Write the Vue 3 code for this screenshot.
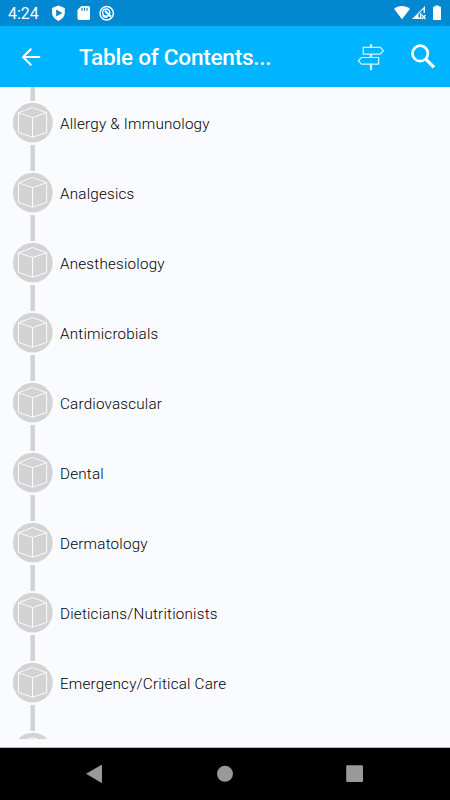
<template>
  <div class="screen">
    <div class="status-bar">
      <span class="clock">4:24</span>
      <svg class="status-left" width="70" height="26" viewBox="0 0 70 26">
        <path d="M8.400 5.500l6.400 2.400v4.700c0 3.700-2.600 6.700-6.400 8.300C4.600 19.300 2 16.300 2 12.600V7.900z" fill="#fff" />
        <path d="M6.200 9.400v7.200l6.100-3.600z" fill="#0288d1" />
        <path d="M31.300 6h7.200c.9 0 1.500.6 1.500 1.500v11c0 .9-.6 1.500-1.500 1.500H29c-.9 0-1.500-.6-1.500-1.500V10z" fill="#fff" />
        <path d="M32 7.700v3M34.500 7.700v3M37 7.700v3" stroke="#0288d1" stroke-width="1.200" />
        <circle cx="56.700" cy="13.200" r="6.700" fill="none" stroke="#fff" stroke-width="1.500" />
        <circle cx="56.200" cy="12.600" r="3.600" fill="none" stroke="#fff" stroke-width="1.400" />
        <path d="M55 10.800l6 6" stroke="#fff" stroke-width="2.200" />
        <path d="M52.600 15.300c1.100 1.700 2.700 2.300 4.800 2" fill="none" stroke="#fff" stroke-width="1.200" />
      </svg>
      <svg class="status-right" width="56" height="26" viewBox="0 0 56 26">
        <path d="M0 8.800C4.600 5 11.400 5 16 8.800L8 19.200z" fill="#fff" />
        <path d="M18 19L31 6v7h-3.500v6z" fill="#fff" />
        <path d="M29.500 9V13h-3.400v4.600h-1.600V14z" fill="#0288d1" />
        <path d="M28 15l3.500 4M31.500 15L28 19" stroke="#fff" stroke-width="1.200" />
        <path d="M41.300 6.100V5.600h3.400v.9h1.400c.5 0 .9.400.9.900v11.500c0 .6-.4 1-.9 1h-6.200c-.6 0-.9-.4-.9-1V7.400c0-.5.3-.9.9-.9h1.400z" fill="#fff" />
      </svg>
    </div>

    <header class="toolbar">
      <svg class="back" width="24" height="24" viewBox="0 0 24 24">
        <path d="M21.200 12H4.200M12.300 3.800L4 12l8.300 8.200" fill="none" stroke="#fff" stroke-width="2" />
      </svg>
      <h1>Table of Contents...</h1>
      <svg class="signpost" width="30" height="30" viewBox="0 0 30 30">
        <g fill="none" stroke="#d9f3ff" stroke-width="1.200">
          <path d="M6.200 5.400h17l3.200 3.300-3.200 3.500h-17z" />
          <path d="M21.600 15.500H4.500l-3.200 3.300 3.200 3.300h17.100z" />
        </g>
        <path d="M14 2.300v3M14 12.300v3M14 22.300v6" stroke="#d9f3ff" stroke-width="2.200" />
      </svg>
      <svg class="search" width="28" height="28" viewBox="0 0 28 28">
        <circle cx="11.200" cy="10.400" r="7.700" fill="none" stroke="#fff" stroke-width="2.700" />
        <path d="M16.600 15.900l8.400 8.500" stroke="#fff" stroke-width="3.300" />
      </svg>
    </header>

    <ul class="contents">
      <li v-for="(item, i) in sections" :key="i">
        <svg class="node" width="60" height="70" viewBox="0 0 60 70">
          <path d="M32.700 0v14M32.700 57.900v12.100" stroke="#d3d3d3" stroke-width="4.600" />
          <circle cx="32.800" cy="35.700" r="19.900" fill="#d3d3d3" />
          <path
            d="M32.500 20.500l14.100 5.200v19.800l-14.100 4.700-14-4.700V25.700zM18.500 25.700l14 4.800 14.100-4.800M32.500 30.500v19.700"
            fill="none" stroke="#fafbff" stroke-width="1" stroke-linejoin="round" />
        </svg>
        <span v-if="item">{{ item }}</span>
      </li>
    </ul>

    <nav class="nav-bar">
      <svg width="450" height="52" viewBox="0 0 450 52">
        <g fill="#999">
          <path d="M86 25.700L101.200 17q.8-.4.8.5v16.800q0 .9-.8.500z" />
          <circle cx="225" cy="25.800" r="8" />
          <rect x="346.200" y="17.200" width="16.800" height="16.800" rx="1" />
        </g>
      </svg>
    </nav>
  </div>
</template>

<script setup>
import { ref } from 'vue'

const sections = ref([
  'Allergy & Immunology',
  'Analgesics',
  'Anesthesiology',
  'Antimicrobials',
  'Cardiovascular',
  'Dental',
  'Dermatology',
  'Dieticians/Nutritionists',
  'Emergency/Critical Care',
  '',
])
</script>

<style>
body {
  margin: 0;
  overflow: hidden;
}
</style>

<style scoped>
.screen {
  width: 450px;
  height: 800px;
  display: flex;
  flex-direction: column;
  overflow: hidden;
  background: #fafbff;
  font-family: Roboto, "Liberation Sans", sans-serif;
}

.status-bar {
  flex: none;
  height: 26px;
  display: flex;
  align-items: center;
  background: #0288d1;
  color: #fff;
}

.clock {
  width: 42px;
  padding-left: 8px;
  font-size: 16px;
  line-height: 24px;
  padding-top: 2px;
}

.status-right { margin-left: auto; }

.toolbar {
  flex: none;
  height: 61px;
  display: flex;
  align-items: center;
  background: #00b4ff;
  color: #fff;
}

.back { margin-left: 19px; }

h1 {
  flex: 1;
  margin: 3px 0 0 36px;
  font-size: 22.6px;
  font-weight: 500;
  line-height: 30px;
  letter-spacing: -0.25px;
  white-space: nowrap;
}

.search { margin: 0 13px 0 22px; }

.contents {
  flex: none;
  height: 652px;
  margin: 0;
  padding: 0;
  overflow: hidden;
  list-style: none;
}

li {
  display: flex;
  align-items: center;
  height: 70px;
  font-size: 15.2px;
  font-weight: 350;
  letter-spacing: 0.22px;
  color: #000;
}

li span { padding-top: 3px; }

.node { flex: none; }

.nav-bar {
  margin-top: auto;
  height: 52px;
  background: #000;
  border-top: 1px solid #b5b5b5;
}
</style>
